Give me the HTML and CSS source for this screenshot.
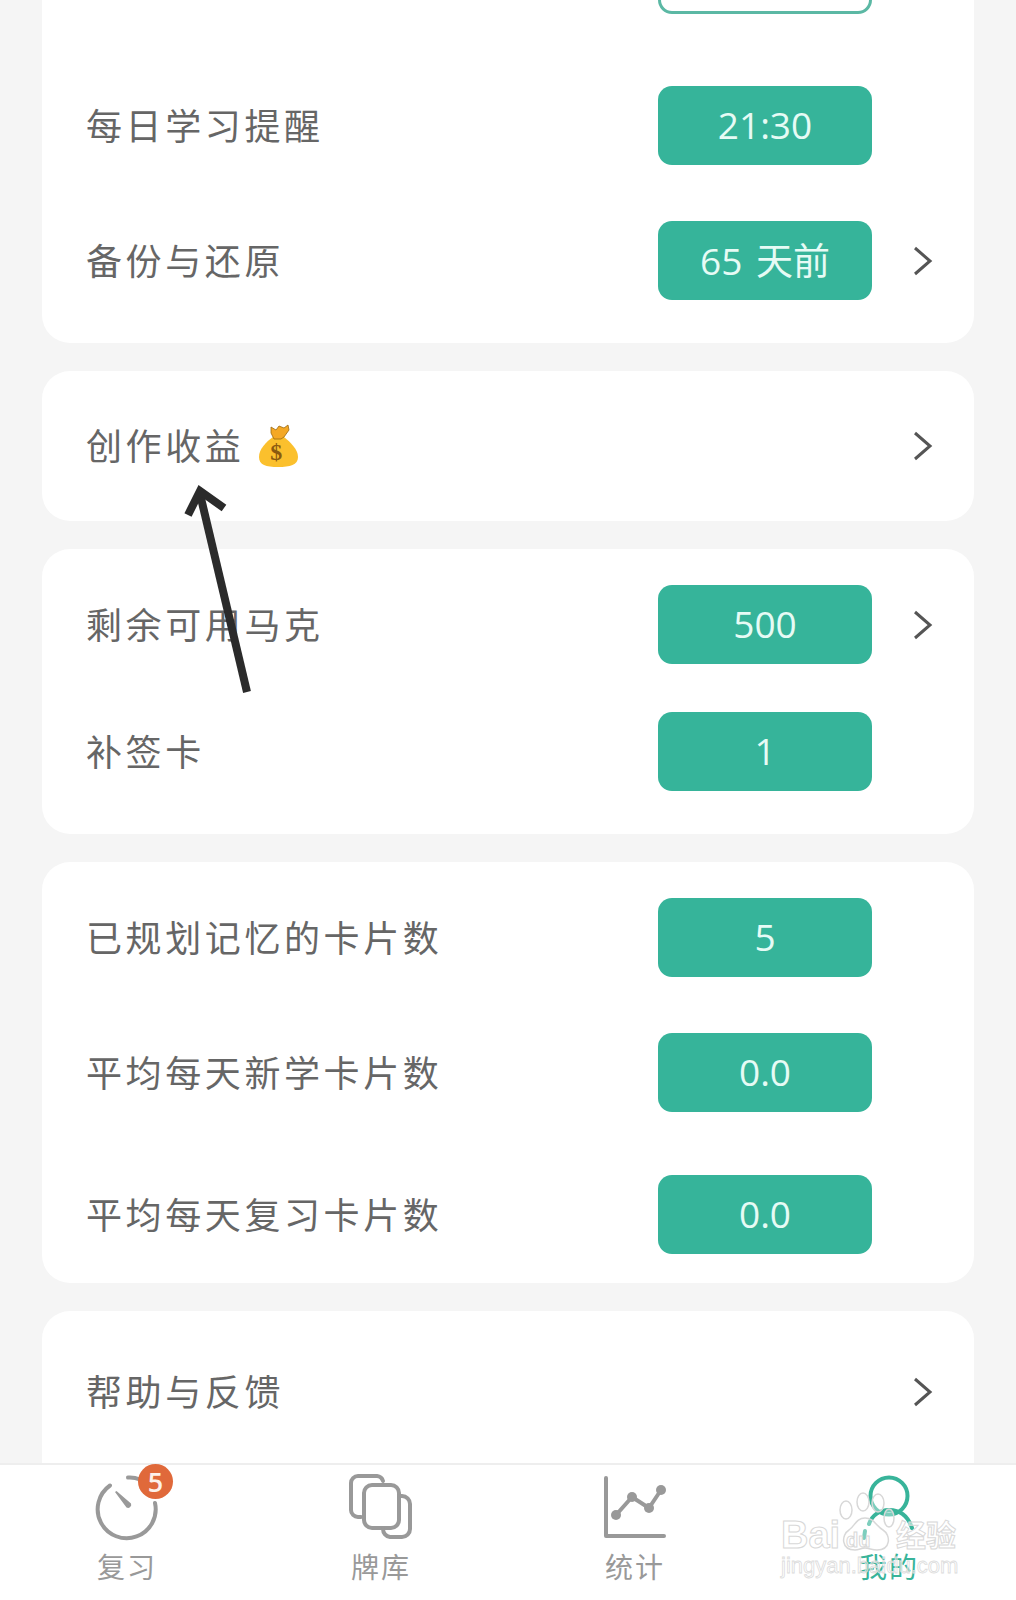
FILE: index.html
```html
<!DOCTYPE html>
<html lang="zh-CN">
  <head>
    <meta charset="UTF-8" />
    <meta name="viewport" content="width=device-width, initial-scale=1.0" />
    <title>我的</title>
    <link rel="stylesheet" href="styles.css">
  </head>
  <body>
    <div class="screen">
      <div class="scroll">
        <div class="card card-first">
          <div class="row">
            <span class="label"></span>
            <span class="pill pill-outline"></span>
            <span class="chev-slot"></span>
          </div>
          <div class="row gap-72">
            <span class="label">每日学习提醒</span>
            <span class="pill">21:30</span>
            <span class="chev-slot"></span>
          </div>
          <div class="row gap-56">
            <span class="label">备份与还原</span>
            <span class="pill">65 天前</span>
            <span class="chev-slot">
              <svg class="chev" viewBox="0 0 20 30"><polyline points="2,2 17,15 2,28" /></svg>
            </span>
          </div>
        </div>

        <div class="card card-single">
          <div class="row">
            <span class="label">创作收益
              <svg class="bag" viewBox="0 0 40 44">
                <path class="bag-body" d="M15 13C8 18 1 25 1 33c0 8 7 10 19 10s20-2 20-10c0-8-8-15-14-20z" />
                <path class="bag-tie" d="M13 3l5 3 3-4 5 2 4-3 1 5-5 7-3 2h-7l-3-6z" />
                <text class="bag-sign" x="20" y="36" text-anchor="middle">$</text>
              </svg>
            </span>
            <span class="chev-slot">
              <svg class="chev" viewBox="0 0 20 30"><polyline points="2,2 17,15 2,28" /></svg>
            </span>
          </div>
        </div>

        <div class="card card-marks">
          <div class="row">
            <span class="label">剩余可用马克</span>
            <span class="pill">500</span>
            <span class="chev-slot">
              <svg class="chev" viewBox="0 0 20 30"><polyline points="2,2 17,15 2,28" /></svg>
            </span>
          </div>
          <div class="row gap-48">
            <span class="label">补签卡</span>
            <span class="pill">1</span>
            <span class="chev-slot"></span>
          </div>
        </div>

        <div class="card card-stats">
          <div class="row">
            <span class="label">已规划记忆的卡片数</span>
            <span class="pill">5</span>
            <span class="chev-slot"></span>
          </div>
          <div class="row gap-56">
            <span class="label">平均每天新学卡片数</span>
            <span class="pill">0.0</span>
            <span class="chev-slot"></span>
          </div>
          <div class="row gap-63">
            <span class="label">平均每天复习卡片数</span>
            <span class="pill">0.0</span>
            <span class="chev-slot"></span>
          </div>
        </div>

        <div class="card card-last">
          <div class="row">
            <span class="label">帮助与反馈</span>
            <span class="chev-slot">
              <svg class="chev" viewBox="0 0 20 30"><polyline points="2,2 17,15 2,28" /></svg>
            </span>
          </div>
        </div>
      </div>

      <div class="tabbar">
        <div class="tab">
          <div class="tab-icon">
            <svg viewBox="0 0 70 70">
              <path class="stroke" d="M18 14.500A29 29 0 1 0 63 32" />
              <path class="stroke" d="M36 6.500c4-.3 8 .3 12 2" />
              <path class="fill" d="M23 21l1.500-1 14.500 12.500a3.200 3.200 0 0 1-4.500 4z" />
            </svg>
            <span class="badge">5</span>
          </div>
          <div class="tab-label">复习</div>
        </div>
        <div class="tab">
          <div class="tab-icon">
            <svg viewBox="0 0 70 70">
              <path class="stroke" d="M15 46h-3a7 7 0 0 1-7-7V12a7 7 0 0 1 7-7h19a7 7 0 0 1 6 5" />
              <rect class="stroke" x="18" y="14" width="35" height="43" rx="8" />
              <path class="stroke" d="M53 25h3a8 8 0 0 1 8 8v25a8 8 0 0 1-8 8H44a8 8 0 0 1-7-8" />
            </svg>
          </div>
          <div class="tab-label">牌库</div>
        </div>
        <div class="tab">
          <div class="tab-icon">
            <svg viewBox="0 0 70 70">
              <path class="stroke" d="M6 7v58h58" />
              <polyline class="stroke" points="16,44 32,26 49,37 61,19" />
              <circle class="fill" cx="16" cy="44" r="5" />
              <circle class="fill" cx="32" cy="26" r="5" />
              <circle class="fill" cx="49" cy="37" r="5" />
              <circle class="fill" cx="61" cy="19" r="5" />
            </svg>
          </div>
          <div class="tab-label">统计</div>
        </div>
        <div class="tab tab-active">
          <div class="tab-icon">
            <svg viewBox="0 0 70 70">
              <circle class="stroke" cx="35" cy="25" r="18.500" />
              <path class="stroke" d="M15 53c3-9 11-14 20-14 11 0 19 6 23 18" />
              <path class="stroke" d="M10 67l1-7" />
            </svg>
          </div>
          <div class="tab-label">我的</div>
        </div>
      </div>

      <!-- hand drawn arrow on the screenshot -->
      <svg class="arrow" viewBox="0 0 1016 1600">
        <path d="M247 692L200 494" />
        <path d="M188 515L200 491L224 508" />
      </svg>

      <svg class="watermark" viewBox="0 0 200 100">
        <text class="wm-logo" x="3" y="58">Bai</text>
        <ellipse class="wm-paw" cx="68" cy="20" rx="6" ry="9" />
        <ellipse class="wm-paw" cx="85" cy="12" rx="6" ry="9" />
        <ellipse class="wm-paw" cx="100" cy="13" rx="6" ry="9" />
        <ellipse class="wm-paw" cx="111" cy="28" rx="5" ry="9" />
        <path class="wm-paw" d="M87 28c-9 0-10 8-16 12-8 5-8 20 6 20 4 0 6-2 10-2s7 2 12 2c14 0 14-15 6-20-7-4-9-12-18-12z" />
        <text class="wm-du" x="68" y="57">du</text>
        <text class="wm-cn" x="118" y="56">经验</text>
        <text class="wm-url" x="3" y="83">jingyan.baidu.com</text>
      </svg>
    </div>
  </body>
</html>
```

FILE: styles.css
```css
body {
  margin: 0;
  background: #f5f5f5;
  font-family: "Noto Sans CJK SC", "Noto Sans", sans-serif;
}
.screen {
  position: relative;
  width: 1016px;
  height: 1600px;
  overflow: hidden;
  display: flex;
  flex-direction: column;
}
.scroll {
  height: 1463px;
  overflow: hidden;
  flex-shrink: 0;
}
.card {
  background: white;
  border-radius: 28px;
  margin: 28px 42px 0;
  padding: 35px 0 43px 44px;
}
.card-first {
  margin-top: -100px;
}
.card-single {
  padding-bottom: 36px;
}
.card-marks {
  padding-top: 36px;
}
.card-stats {
  padding-top: 36px;
  padding-bottom: 29px;
}
.card-last {
  padding-top: 41px;
  padding-bottom: 120px;
}
.row {
  display: flex;
  align-items: center;
  min-height: 79px;
}
.gap-48 {
  margin-top: 48px;
}
.gap-56 {
  margin-top: 56px;
}
.gap-63 {
  margin-top: 63px;
}
.gap-72 {
  margin-top: 72px;
}
.label {
  flex: 1;
  display: flex;
  align-items: center;
  padding-bottom: 4px;
  font-size: 36px;
  letter-spacing: 3.6px;
  color: #666;
  white-space: nowrap;
}
.pill {
  width: 214px;
  height: 79px;
  box-sizing: border-box;
  display: flex;
  align-items: center;
  justify-content: center;
  padding-bottom: 3px;
  background: #36b49a;
  border-radius: 14px;
  font-family: "Open Sans", "Noto Sans CJK SC", sans-serif;
  font-size: 37px;
  word-spacing: 4px;
  color: #e6fbf5;
  white-space: pre;
}
.pill-outline {
  background: white;
  border: 3px solid #5bb8a4;
}
.chev-slot {
  width: 102px;
  display: flex;
  justify-content: center;
}
.chev {
  width: 20px;
  height: 30px;
  fill: none;
  stroke: #555;
  stroke-width: 3;
}
.bag {
  width: 40px;
  height: 44px;
  margin-left: 14px;
  margin-top: 4px;
}
.bag-body {
  fill: #fbc02d;
}
.bag-tie {
  fill: #f4a825;
  stroke: #9a6a12;
  stroke-width: 0.8;
}
.bag-sign {
  font-family: "Liberation Serif", serif;
  font-weight: bold;
  font-size: 24px;
  fill: #8a5a10;
}
.tabbar {
  flex: 1;
  display: grid;
  grid-template-columns: repeat(4, 1fr);
  background: white;
  border-top: 2px solid #eee;
  padding-top: 6px;
}
.tab {
  display: flex;
  flex-direction: column;
  align-items: center;
  color: #999;
}
.tab-active {
  color: #38b49a;
}
.tab-icon {
  position: relative;
  width: 70px;
  height: 70px;
}
.tab-icon svg {
  display: block;
  width: 70px;
  height: 70px;
}
.stroke {
  fill: none;
  stroke: currentColor;
  stroke-width: 4;
  stroke-linecap: round;
  stroke-linejoin: round;
}
.fill {
  fill: currentColor;
}
.badge {
  position: absolute;
  top: -7px;
  right: -11px;
  width: 35px;
  height: 35px;
  border-radius: 50%;
  background: #e0693a;
  color: #fdf1ea;
  font-family: "Open Sans", sans-serif;
  font-weight: 600;
  font-size: 27px;
  line-height: 35px;
  text-align: center;
}
.tab-label {
  margin-top: 5px;
  font-size: 28px;
  line-height: 40px;
  letter-spacing: 2px;
}
.arrow {
  position: absolute;
  top: 0;
  left: 0;
  width: 1016px;
  height: 1600px;
  pointer-events: none;
  fill: none;
  stroke: #2b2b2b;
  stroke-width: 8;
}
.watermark {
  position: absolute;
  left: 778px;
  top: 1490px;
  width: 200px;
  height: 100px;
  pointer-events: none;
}
.wm-logo,
.wm-cn,
.wm-du {
  font-family: "Liberation Sans", "Noto Sans CJK SC", sans-serif;
  font-weight: bold;
  fill: rgba(255, 255, 255, 0.5);
  stroke: #d8d8d8;
  stroke-width: 1;
}
.wm-logo {
  font-size: 38px;
}
.wm-cn {
  font-size: 30px;
}
.wm-du {
  font-size: 20px;
}
.wm-paw {
  fill: rgba(255, 255, 255, 0.35);
  stroke: #d8d8d8;
  stroke-width: 1.500;
}
.wm-url {
  font-family: "Liberation Sans", sans-serif;
  font-size: 22px;
  fill: rgba(255, 255, 255, 0.4);
  stroke: #dcdcdc;
  stroke-width: 0.8;
}
```
